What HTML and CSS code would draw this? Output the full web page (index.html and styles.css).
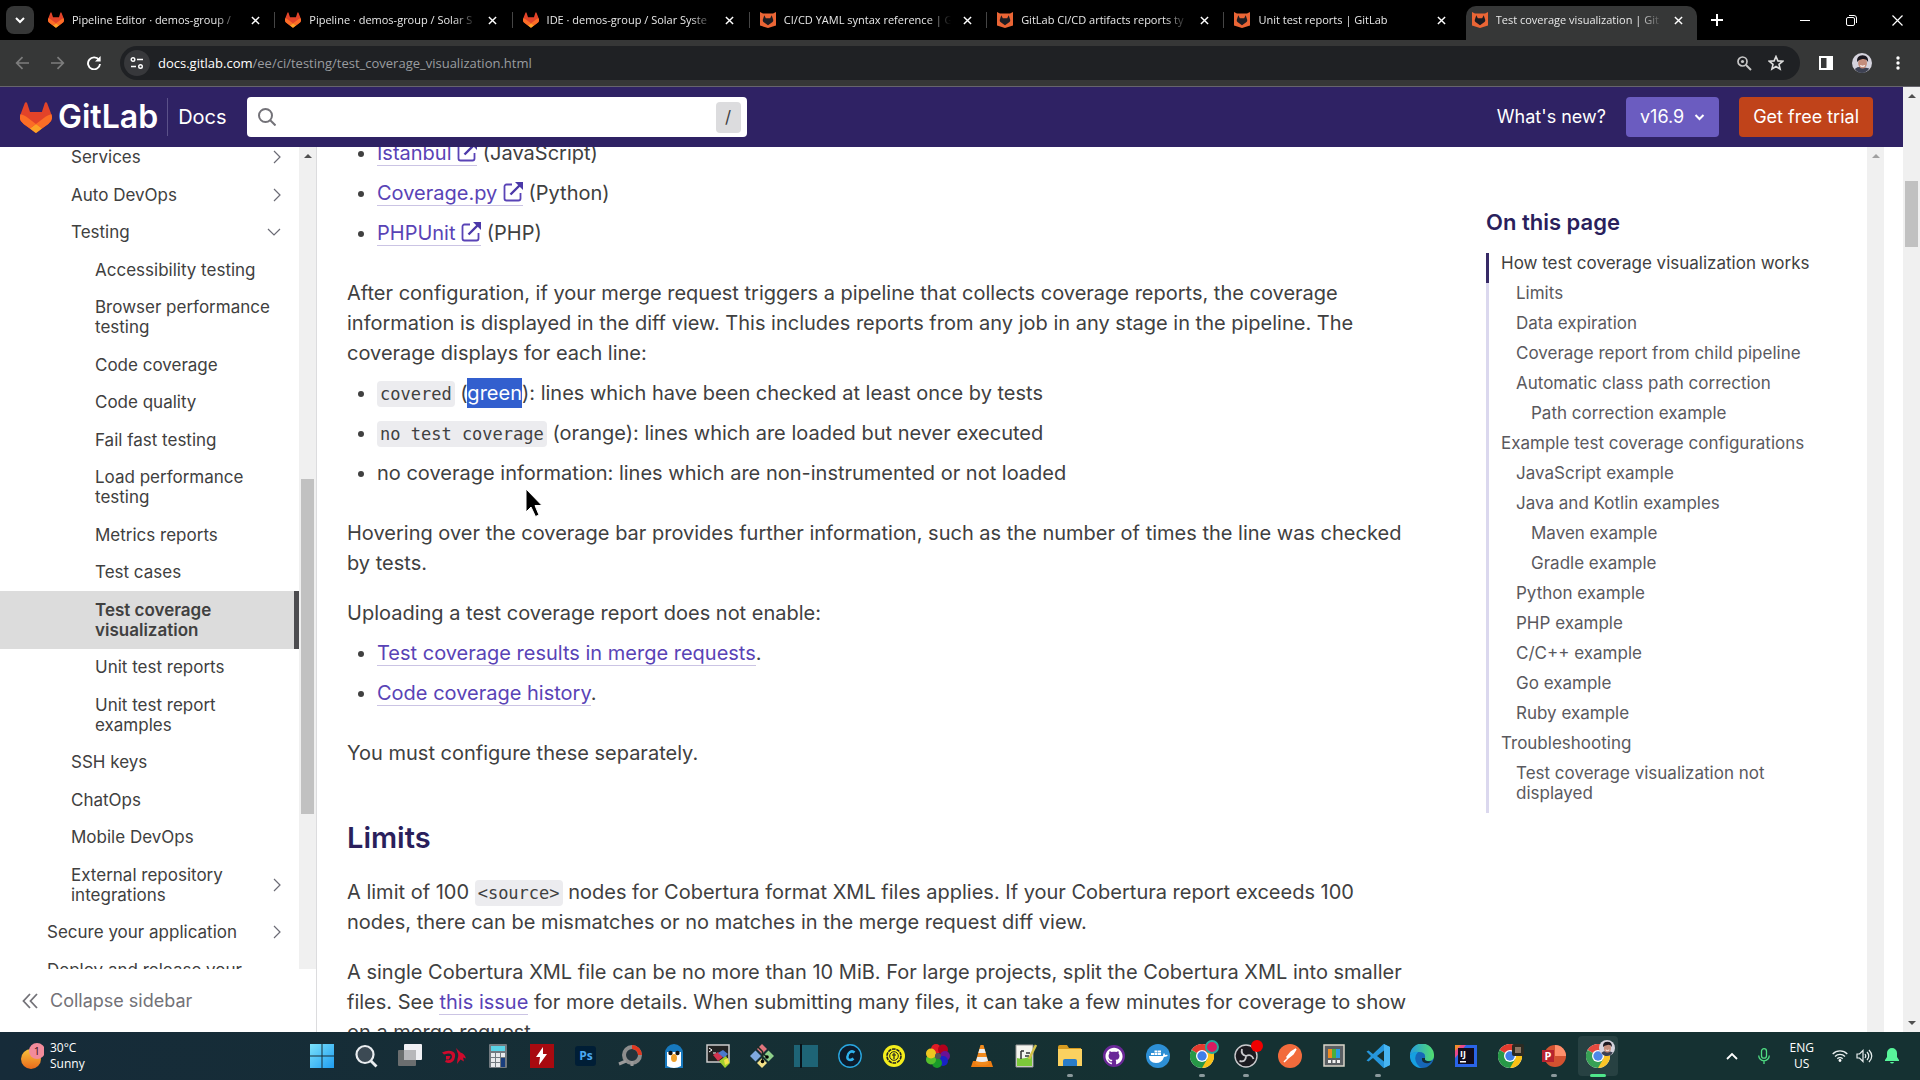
FILE: index.html
```html
<!DOCTYPE html>
<html lang="en">
<head>
<meta charset="utf-8">
<title>Test coverage visualization | GitLab</title>
<link rel="stylesheet" href="styles.css">
</head>
<body>
<svg class="defs" aria-hidden="true">
  <symbol id="tanuki" viewBox="0 0 25 24">
    <path fill="#E24329" d="m24.507 9.5-.034-.09L21.082.562a.896.896 0 0 0-1.694.091l-2.29 7.01H7.825L5.535.653a.898.898 0 0 0-1.694-.09L.451 9.411.416 9.5a6.297 6.297 0 0 0 2.09 7.278l.012.01.03.022 5.16 3.867 2.56 1.935 1.554 1.176a1.051 1.051 0 0 0 1.268 0l1.555-1.176 2.56-1.935 5.197-3.89.014-.01A6.297 6.297 0 0 0 24.507 9.5Z"/>
    <path fill="#FC6D26" d="m24.507 9.5-.034-.09a11.44 11.44 0 0 0-4.56 2.051l-7.447 5.632 4.742 3.584 5.197-3.89.014-.01A6.297 6.297 0 0 0 24.507 9.5Z"/>
    <path fill="#FCA326" d="m7.707 20.677 2.56 1.935 1.555 1.176a1.051 1.051 0 0 0 1.268 0l1.555-1.176 2.56-1.935-4.743-3.584-4.755 3.584Z"/>
    <path fill="#FC6D26" d="M5.01 11.461a11.43 11.43 0 0 0-4.56-2.05L.416 9.5a6.297 6.297 0 0 0 2.09 7.278l.012.01.03.022 5.16 3.867 4.745-3.584-7.444-5.632Z"/>
  </symbol>
  <symbol id="docsfox" viewBox="0 0 16 16">
    <path fill="#ea6535" d="M0 0l3 1.500h10L16 0v13.500L8 16 0 13.500z"/>
    <path fill="#1c1c22" d="M4.300 3.300l1.500 2.900h4.400l1.500-2.900 1.500 4.500c.2 1-.2 1.900-1 2.500L8 13.300l-4.200-3c-.8-.6-1.200-1.500-1-2.500z"/>
  </symbol>
  <symbol id="close" viewBox="0 0 10 10"><path d="M1 1l8 8M9 1l-8 8" stroke="#fff" stroke-width="1.600" fill="none"/></symbol>
  <symbol id="chev" viewBox="0 0 8 14"><path d="M1 1l6 6-6 6" stroke="#6b6b75" stroke-width="1.200" fill="none"/></symbol>
  <symbol id="chev-down" viewBox="0 0 14 8"><path d="M1 1l6 6 6-6" stroke="#6b6b75" stroke-width="1.200" fill="none"/></symbol>
  <symbol id="ext" viewBox="0 0 20 20"><path d="M9 2.500H3.500A2 2 0 0 0 1.500 4.500v12a2 2 0 0 0 2 2h12a2 2 0 0 0 2-2V11" stroke="#5943b6" stroke-width="1.800" fill="none"/><path d="M7.500 12.500L17 3" stroke="#4b38a8" stroke-width="2.400"/><path d="M12 0h8v8z" fill="#4b38a8"/></symbol>
  <symbol id="chrome" viewBox="0 0 24 24">
    <circle cx="12" cy="12" r="12" fill="#fff"/>
    <path fill="#e33b2e" d="M12 12L1.600 6A12 12 0 0 1 22.400 6z"/>
    <path fill="#fbc116" d="M12 12L22.400 6A12 12 0 0 1 12 24z"/>
    <path fill="#279847" d="M1.600 6A12 12 0 0 0 12 24l5.200-9-5.200-3z"/>
    <circle cx="12" cy="12" r="6" fill="#fff"/><circle cx="12" cy="12" r="4.700" fill="#3f7ee8"/>
  </symbol>
  <symbol id="face" viewBox="0 0 18 18">
    <circle cx="9" cy="9" r="9" fill="#d5d3dd"/>
    <path fill="#3d4152" d="M2.500 14.500Q5 12 9 12.500t6.500 1.500Q13 18 9 18t-6.500-3.500z"/>
    <ellipse cx="9.500" cy="9" rx="4" ry="5" fill="#c58e7c"/>
    <path fill="#1c1820" d="M4.500 8Q4 2 9.500 2t5 6q-1.500-3-5-2.500T4.500 8z"/>
    <path d="M7.500 11.200q2 1.500 4 0" stroke="#fff" fill="none"/>
  </symbol>
</svg>

<header class="tabstrip">
  <button class="tab-search" aria-label="Search tabs"><svg width="10" height="8" viewBox="0 0 10 8"><path d="M1 2l4 4 4-4" stroke="#fff" stroke-width="2" fill="none"/></svg></button>
  <nav class="tabs" aria-label="Browser tabs">
    <div class="tab"><svg class="fav"><use href="#tanuki"/></svg><span class="tab-title">Pipeline Editor · demos-group /</span><button class="tab-close" aria-label="Close"><svg><use href="#close"/></svg></button></div>
    <div class="tab"><svg class="fav"><use href="#tanuki"/></svg><span class="tab-title">Pipeline · demos-group / Solar S</span><button class="tab-close" aria-label="Close"><svg><use href="#close"/></svg></button></div>
    <div class="tab"><svg class="fav"><use href="#tanuki"/></svg><span class="tab-title">IDE · demos-group / Solar Syste</span><button class="tab-close" aria-label="Close"><svg><use href="#close"/></svg></button></div>
    <div class="tab"><svg class="fav"><use href="#docsfox"/></svg><span class="tab-title">CI/CD YAML syntax reference | G</span><button class="tab-close" aria-label="Close"><svg><use href="#close"/></svg></button></div>
    <div class="tab"><svg class="fav"><use href="#docsfox"/></svg><span class="tab-title">GitLab CI/CD artifacts reports ty</span><button class="tab-close" aria-label="Close"><svg><use href="#close"/></svg></button></div>
    <div class="tab"><svg class="fav"><use href="#docsfox"/></svg><span class="tab-title">Unit test reports | GitLab</span><button class="tab-close" aria-label="Close"><svg><use href="#close"/></svg></button></div>
    <div class="tab active"><svg class="fav"><use href="#docsfox"/></svg><span class="tab-title">Test coverage visualization | Git</span><button class="tab-close" aria-label="Close"><svg><use href="#close"/></svg></button></div>
  </nav>
  <button class="new-tab" aria-label="New tab"><svg width="12" height="12" viewBox="0 0 12 12"><path d="M6 0v12M0 6h12" stroke="#fff" stroke-width="2"/></svg></button>
  <div class="window-controls">
    <button aria-label="Minimize"><svg width="10" height="10" viewBox="0 0 10 10"><path d="M0 5.500h10" stroke="#fff"/></svg></button>
    <button aria-label="Restore"><svg width="11" height="11" viewBox="0 0 11 11"><rect x=".5" y="2.500" width="8" height="8" rx="1.500" fill="none" stroke="#fff"/><path d="M3 .5h5a2.500 2.500 0 0 1 2.500 2.500v5" fill="none" stroke="#fff"/></svg></button>
    <button aria-label="Close window"><svg width="11" height="11" viewBox="0 0 11 11"><path d="M.5.5l10 10M10.500.5l-10 10" stroke="#fff" stroke-width="1.200"/></svg></button>
  </div>
</header>

<div class="toolbar">
  <button class="tool" aria-label="Back"><svg width="14" height="14" viewBox="0 0 14 14"><path d="M14 7H2M7.500 1.200L1.700 7l5.800 5.800" stroke="#7d7d7d" stroke-width="1.700" fill="none"/></svg></button>
  <button class="tool" aria-label="Forward"><svg width="14" height="14" viewBox="0 0 14 14"><path d="M0 7h12M6.500 1.200L12.300 7l-5.800 5.800" stroke="#7d7d7d" stroke-width="1.700" fill="none"/></svg></button>
  <button class="tool" aria-label="Reload"><svg width="14" height="14" viewBox="0 0 14 14"><path d="M12 4A6 6 0 1 0 13 8" stroke="#fff" stroke-width="1.900" fill="none"/><path d="M13.600 0v5.500H8z" fill="#fff"/></svg></button>
  <div class="omnibox">
    <button class="site-info" aria-label="Site information"><svg width="14" height="12" viewBox="0 0 14 12"><circle cx="3" cy="2.500" r="1.800" stroke="#fff" stroke-width="1.400" fill="none"/><path d="M7 2.500h6M1 9.500h5" stroke="#fff" stroke-width="1.600"/><circle cx="10.500" cy="9.500" r="1.800" stroke="#fff" stroke-width="1.400" fill="none"/></svg></button>
    <div class="url"><b>docs.gitlab.com</b>/ee/ci/testing/test_coverage_visualization.html</div>
    <button class="tool" aria-label="Zoom"><svg width="15" height="15" viewBox="0 0 15 15"><circle cx="5.500" cy="5.500" r="4.500" stroke="#c8c8c8" stroke-width="1.700" fill="none"/><path d="M9 9l5 5" stroke="#c8c8c8" stroke-width="2"/><circle cx="5.500" cy="5.500" r="1.600" fill="#c8c8c8"/></svg></button>
    <button class="tool" aria-label="Bookmark"><svg width="16" height="16" viewBox="0 0 16 16"><path d="M8 1.500l1.900 4.400 4.700.4-3.600 3.100 1.100 4.600L8 11.500 3.900 14 5 9.400 1.400 6.300l4.700-.4z" stroke="#ddd" stroke-width="1.600" fill="none"/></svg></button>
  </div>
  <button class="tool" aria-label="Side panel"><svg width="14" height="14" viewBox="0 0 14 14"><rect x="1" y="1" width="12" height="12" stroke="#fff" stroke-width="2" fill="none"/><path d="M7.500 0H14v14H7.500z" fill="#fff"/></svg></button>
  <button class="tool" aria-label="Profile"><svg width="20" height="20"><use href="#face"/></svg></button>
  <button class="tool" aria-label="Menu"><svg width="4" height="14" viewBox="0 0 4 14"><g fill="#fff"><circle cx="2" cy="2" r="1.700"/><circle cx="2" cy="7" r="1.700"/><circle cx="2" cy="12" r="1.700"/></g></svg></button>
</div>

<div class="viewport">
  <div class="page">
    <header class="site-header">
      <a class="brand" href="#"><svg width="32" height="31"><use href="#tanuki"/></svg><span>GitLab</span></a>
      <a class="docs" href="#">Docs</a>
      <label class="search">
        <svg width="18" height="18" viewBox="0 0 18 18"><circle cx="7.500" cy="7.500" r="6.500" stroke="#737278" stroke-width="2" fill="none"/><path d="M12 12l5.500 5.500" stroke="#737278" stroke-width="2"/></svg>
        <input type="text" aria-label="Search">
        <kbd>/</kbd>
      </label>
      <a class="whats-new" href="#">What's new?</a>
      <button class="btn version">v16.9<svg width="11" height="7" viewBox="0 0 11 7"><path d="M1.500 1l4 4 4-4" stroke="#fff" stroke-width="2" fill="none"/></svg></button>
      <button class="btn trial">Get free trial</button>
    </header>
    <div class="columns">
      <aside class="sidebar">
        <div class="nav-area">
          <ul class="nav">
            <li class="l2"><a href="#">Services</a><svg class="chev"><use href="#chev"/></svg></li>
            <li class="l2"><a href="#">Auto DevOps</a><svg class="chev"><use href="#chev"/></svg></li>
            <li class="l2"><a href="#">Testing</a><svg class="chev-down"><use href="#chev-down"/></svg></li>
            <li class="l3"><a href="#">Accessibility testing</a></li>
            <li class="l3"><a href="#">Browser performance testing</a></li>
            <li class="l3"><a href="#">Code coverage</a></li>
            <li class="l3"><a href="#">Code quality</a></li>
            <li class="l3"><a href="#">Fail fast testing</a></li>
            <li class="l3"><a href="#">Load performance testing</a></li>
            <li class="l3"><a href="#">Metrics reports</a></li>
            <li class="l3"><a href="#">Test cases</a></li>
            <li class="l3 current"><a href="#">Test coverage visualization</a></li>
            <li class="l3"><a href="#">Unit test reports</a></li>
            <li class="l3"><a href="#">Unit test report examples</a></li>
            <li class="l2"><a href="#">SSH keys</a></li>
            <li class="l2"><a href="#">ChatOps</a></li>
            <li class="l2"><a href="#">Mobile DevOps</a></li>
            <li class="l2"><a href="#">External repository integrations</a><svg class="chev"><use href="#chev"/></svg></li>
            <li class="l1"><a href="#">Secure your application</a><svg class="chev"><use href="#chev"/></svg></li>
            <li class="l1"><a href="#">Deploy and release your application</a></li>
          </ul>
          <div class="scrollbar"><i class="arrow up"></i><div class="track"><div class="thumb" style="top:39%;height:41.7%"></div></div></div>
        </div>
        <button class="collapse"><svg width="16" height="16" viewBox="0 0 16 16"><path d="M8 1L1.500 8 8 15M15 1L8.500 8 15 15" stroke="#737278" stroke-width="1.800" fill="none"/></svg>Collapse sidebar</button>
      </aside>
      <main class="article">
        <ul>
          <li><a href="#">Istanbul <svg class="ext"><use href="#ext"/></svg></a> (JavaScript)</li>
          <li><a href="#">Coverage.py <svg class="ext"><use href="#ext"/></svg></a> (Python)</li>
          <li><a href="#">PHPUnit <svg class="ext"><use href="#ext"/></svg></a> (PHP)</li>
        </ul>
        <p class="lead">After configuration, if your merge request triggers a pipeline that collects coverage reports, the coverage information is displayed in the diff view. This includes reports from any job in any stage in the pipeline. The coverage displays for each line:</p>
        <ul>
          <li><code>covered</code> (<mark>green</mark>): lines which have been checked at least once by tests</li>
          <li><code>no test coverage</code> (orange): lines which are loaded but never executed</li>
          <li>no coverage information: lines which are non-instrumented or not loaded</li>
        </ul>
        <p>Hovering over the coverage bar provides further information, such as the number of times the line was checked by tests.</p>
        <p class="lead">Uploading a test coverage report does not enable:</p>
        <ul>
          <li><a href="#">Test coverage results in merge requests</a>.</li>
          <li><a href="#">Code coverage history</a>.</li>
        </ul>
        <p>You must configure these separately.</p>
        <h2>Limits</h2>
        <p>A limit of 100 <code>&lt;source&gt;</code> nodes for Cobertura format XML files applies. If your Cobertura report exceeds 100 nodes, there can be mismatches or no matches in the merge request diff view.</p>
        <p>A single Cobertura XML file can be no more than 10 MiB. For large projects, split the Cobertura XML into smaller files. See <a href="#">this issue</a> for more details. When submitting many files, it can take a few minutes for coverage to show on a merge request.</p>
      </main>
      <nav class="toc" aria-label="On this page">
        <div class="toc-body">
          <h4>On this page</h4>
          <ul>
            <li class="here"><a href="#">How test coverage visualization works</a></li>
            <li class="t2"><a href="#">Limits</a></li>
            <li class="t2"><a href="#">Data expiration</a></li>
            <li class="t2"><a href="#">Coverage report from child pipeline</a></li>
            <li class="t2"><a href="#">Automatic class path correction</a></li>
            <li class="t3"><a href="#">Path correction example</a></li>
            <li><a href="#">Example test coverage configurations</a></li>
            <li class="t2"><a href="#">JavaScript example</a></li>
            <li class="t2"><a href="#">Java and Kotlin examples</a></li>
            <li class="t3"><a href="#">Maven example</a></li>
            <li class="t3"><a href="#">Gradle example</a></li>
            <li class="t2"><a href="#">Python example</a></li>
            <li class="t2"><a href="#">PHP example</a></li>
            <li class="t2"><a href="#">C/C++ example</a></li>
            <li class="t2"><a href="#">Go example</a></li>
            <li class="t2"><a href="#">Ruby example</a></li>
            <li><a href="#">Troubleshooting</a></li>
            <li class="t2"><a href="#">Test coverage visualization not displayed</a></li>
          </ul>
        </div>
        <div class="scrollbar idle"><i class="arrow up"></i><div class="track"></div></div>
      </nav>
    </div>
  </div>
  <div class="scrollbar"><i class="arrow up"></i><div class="track"><div class="thumb" style="top:8.4%;height:7.2%"></div></div><i class="arrow down"></i></div>
</div>

<footer class="taskbar">
  <div class="weather">
    <svg width="24" height="28" viewBox="0 0 24 28"><defs><linearGradient id="sun" x1="0" y1="0" x2="0" y2="1"><stop offset="0" stop-color="#f8c33b"/><stop offset="1" stop-color="#e9691c"/></linearGradient></defs><circle cx="11" cy="17" r="10" fill="url(#sun)"/><circle cx="17" cy="9" r="8" fill="#f28b9b"/><text x="17" y="13" text-anchor="middle" font-size="11" fill="#3a1018">1</text></svg>
    <div>30°C<br>Sunny</div>
  </div>
  <div class="apps">
    <button aria-label="Start"><svg viewBox="0 0 24 24"><defs><linearGradient id="win" x1="0" y1="0" x2="1" y2="1"><stop offset="0" stop-color="#7be2fb"/><stop offset="1" stop-color="#1f9df0"/></linearGradient></defs><path fill="url(#win)" d="M0 0h11.500v11.500H0zM12.500 0H24v11.500H12.500zM0 12.500h11.500V24H0zM12.500 12.500H24V24H12.500z"/></svg></button>
    <button aria-label="Search"><svg viewBox="0 0 24 24"><circle cx="11" cy="10.500" r="8.500" fill="#3c4a54" stroke="#e9edf0" stroke-width="2.200"/><path d="M17 17l5.500 5.500" stroke="#e9edf0" stroke-width="2.800"/></svg></button>
    <button aria-label="Task view"><svg viewBox="0 0 24 24"><rect x="6" y="0" width="18" height="16" rx="1" fill="#f0f0f4"/><rect x="0" y="6" width="18" height="16" rx="1" fill="#747576" opacity=".9"/><path fill="#b7b7ba" d="M6 6h12v10H6z"/></svg></button>
    <button aria-label="Red wing"><svg viewBox="0 0 24 24"><path fill="#cf0a2c" d="M0 8.500Q5 6 9 7q5 1 4 6-1 6-7 6l-3-1 1-2q5 1 6-3 0-4-4-3.500L2 10.500zM4 12h4.500L7 15.500H4zM14 4l4.500 4.500q4 1 5.500 6l-3-1 1 4-3.500-2L15 20l.5-5q1.500-4 0-6.500z"/></svg></button>
    <button aria-label="Calculator"><svg viewBox="0 0 24 24"><rect x="3" width="18" height="24" rx="1" fill="#727a80"/><path fill="#5ad3e6" d="M5 2h14v5H5z"/><path fill="#e8eaec" d="M5 9h4v4H5zm5 0h4v4h-4zm5 0h4v4h-4zM5 14h4v4H5zm5 0h4v4h-4zM5 19h4v4H5zm5 0h4v4h-4z"/><path fill="#193e7d" d="M15 14h4v9h-4z"/></svg></button>
    <button aria-label="Flash"><svg viewBox="0 0 24 24"><path fill="#a80a10" d="M0 0h24v24H0z"/><path fill="#fff" d="M13 3L6 13h4l-1 8 8-11h-4z"/></svg></button>
    <button aria-label="Photoshop"><svg viewBox="0 0 24 24"><rect x="1" y="2" width="21" height="20" rx="3" fill="#001e36"/><text x="12" y="16" font-size="12" font-weight="700" text-anchor="middle" fill="#4aa8ef">Ps</text></svg></button>
    <button aria-label="Tracker"><svg viewBox="0 0 24 24"><circle cx="14" cy="11" r="8" fill="#24343c" stroke="#8d8d8d" stroke-width="4"/><path d="M14 3a8 8 0 0 1 8 8" stroke="#e1371f" stroke-width="4" fill="none"/><path d="M8 17l-7 3M14 17v5" stroke="#9a9a9a" stroke-width="3"/></svg></button>
    <button aria-label="Penguin"><svg viewBox="0 0 24 24"><path fill="#1779be" d="M3 24V9a9 9 0 0 1 18 0v15z"/><path fill="#fff" d="M5 22V8h14v14q-7 4-14 0z"/><g fill="#111"><circle cx="8.500" cy="9" r="2.200"/><circle cx="15.500" cy="9" r="2.200"/></g><ellipse cx="12" cy="14" rx="3" ry="4" fill="#efa02a"/></svg></button>
    <button aria-label="Terminal"><svg viewBox="0 0 24 24"><path fill="#222" stroke="#ccc" stroke-width="1.500" d="M1 1h22v17H1z"/><path d="M3 4l3 2-3 2m4 1h3" stroke="#fff" fill="none"/><path fill="#d2334e" d="M7 11l5-3 5 5-5 4z"/><path fill="#4a79cc" d="M12 9l5-3 5 4-4 4z"/><path fill="#a2cf2e" d="M13 17l7-5 4 7-5 5z"/><path fill="#f5e34a" d="M18 16l4-2 1 5-4 2z"/></svg></button>
    <button aria-label="Git"><svg viewBox="0 0 24 24"><path fill="#e0747c" d="M12 0l5 5-5 5-5-5z"/><path fill="#7fa9df" d="M5.500 6.500l5.500 5.500-5.500 5.500L0 12z"/><path fill="#8ecf8a" d="M18.500 6.500L24 12l-5.500 5.500L13 12z"/><path fill="#f1df87" d="M12 14l5 5-5 5-5-5z"/><path d="M7.500 2.500l5 5V18M12 9l5 4" stroke="#1b2a22" stroke-width="1.500" fill="none"/><circle cx="12.500" cy="17.500" r="1.800"/><circle cx="17" cy="13" r="1.800"/></svg></button>
    <button aria-label="Layout"><svg viewBox="0 0 24 24"><path fill="#1e6476" d="M0 1h6v22H0zM8 1h16v22H8z"/><path fill="#08131a" d="M6 0h2v24H6z"/></svg></button>
    <button aria-label="C editor"><svg viewBox="0 0 24 24"><circle cx="12" cy="12" r="11.200" fill="#0c1b2c" stroke="#29a6df" stroke-width="1.400"/><path d="M16.500 8.500q-2-2-4.500-.5c-3 2-4 8 0 8q2 0 3.500-1.500" stroke="#2fb1ee" stroke-width="2.500" fill="none"/></svg></button>
    <button aria-label="Yellow gear"><svg viewBox="0 0 24 24"><circle cx="12" cy="12" r="11" fill="#f4ee1c"/><circle cx="12" cy="12" r="7" fill="none" stroke="#222" stroke-width="1.600" stroke-dasharray="3.600 .8"/><circle cx="12" cy="12" r="4.300" fill="none" stroke="#222"/><path d="M12 9v6M10 11h4" stroke="#222" stroke-width="1.200"/></svg></button>
    <button aria-label="Colour wheel"><svg viewBox="0 0 24 24"><circle cx="10" cy="5" r="5" fill="#e01b24"/><circle cx="17" cy="5.500" r="5" fill="#b4001c"/><circle cx="19" cy="12" r="5" fill="#6a1195"/><circle cx="17" cy="17" r="5" fill="#1822c5"/><circle cx="11" cy="19" r="5" fill="#189b2a"/><circle cx="5" cy="15.500" r="5" fill="#55c12c"/><circle cx="5" cy="9.500" r="5" fill="#eec720"/><circle cx="12" cy="12" r="3" fill="#555"/></svg></button>
    <button aria-label="VLC"><svg viewBox="0 0 24 24"><path fill="#ee7d11" d="M3 17h18l2 6H1z"/><path fill="#f28a1c" d="M10.500 1h3L19 20q-7 3-14 0z"/><path fill="#eceef1" d="M9.500 5h5l1.200 4H8.300zM7.300 13h9.400l1.300 4q-6 2-12 0z"/></svg></button>
    <button aria-label="Notepad++"><svg viewBox="0 0 24 24"><path fill="#f4f4ee" stroke="#999" d="M2 1h17v22H2z"/><path fill="#7cc93a" d="M3 14q8 2 15-3v11H3z"/><path d="M7 7v8M7 7h3M12 9h4M11 12h4" stroke="#333" stroke-width="1.500"/><path d="M22 1l-7 14" stroke="#d2c148" stroke-width="2.500"/></svg></button>
    <button class="open" aria-label="Files"><svg viewBox="0 0 24 24"><path fill="#d79b20" d="M0 3q0-2 2-2h7l2 3h12v4H0z"/><path fill="#fbd160" d="M0 5h24v17H0z"/><path fill="#2a7cc8" d="M5 22v-5q0-2 2-2h10q2 0 2 2v5z"/></svg></button>
    <button aria-label="GitHub"><svg viewBox="0 0 24 24"><circle cx="12" cy="12" r="11" fill="#6a2898"/><path fill="#fff" transform="translate(3.500 3.500) scale(.71)" d="M12 .297c-6.630 0-12 5.373-12 12 0 5.303 3.438 9.800 8.205 11.385.6.113.82-.258.82-.577 0-.285-.01-1.040-.015-2.040-3.338.724-4.042-1.610-4.042-1.610C4.422 18.070 3.633 17.700 3.633 17.700c-1.087-.744.084-.729.084-.729 1.205.084 1.838 1.236 1.838 1.236 1.070 1.835 2.809 1.305 3.495.998.108-.776.417-1.305.76-1.605-2.665-.3-5.466-1.332-5.466-5.930 0-1.310.465-2.380 1.235-3.220-.135-.303-.54-1.523.105-3.176 0 0 1.005-.322 3.300 1.230.96-.267 1.980-.399 3-.405 1.020.006 2.040.138 3 .405 2.280-1.552 3.285-1.230 3.285-1.230.645 1.653.24 2.873.12 3.176.765.84 1.230 1.910 1.230 3.220 0 4.610-2.805 5.625-5.475 5.920.42.36.81 1.096.81 2.220 0 1.606-.015 2.896-.015 3.286 0 .315.21.69.825.57C20.565 22.092 24 17.592 24 12.297c0-6.627-5.373-12-12-12"/></svg></button>
    <button aria-label="Docker"><svg viewBox="0 0 24 24"><circle cx="12" cy="12" r="12" fill="#2d8fd5"/><path fill="#fff" d="M3 12h14q0-2 1-3 1 1 1 2 1-.5 3 0-1 2-4 2-2 6-8 6-7 0-7-7zM5 9h3v2H5zm3.500 0h3v2h-3zm3.500 0h3v2h-3zM8.500 6.500h3v2h-3zm3.500 0h3v2h-3z"/></svg></button>
    <button class="open" aria-label="Chrome"><svg viewBox="0 0 24 24"><use href="#chrome"/></svg><i class="badge ring"></i></button>
    <button class="open" aria-label="OBS"><svg viewBox="0 0 24 24"><circle cx="12" cy="12" r="11" fill="#1b1b20" stroke="#c9c9cc" stroke-width="1.400"/><path d="M12 12Q6.500 10.500 8 5M12 12q5.500-2.500 7.500 3M12 12q0 6.500-6.500 5" stroke="#c9c9cc" stroke-width="1.800" fill="none"/></svg><i class="badge rec"></i></button>
    <button aria-label="Postman"><svg viewBox="0 0 24 24"><circle cx="12" cy="12" r="12" fill="#f26b3c"/><path d="M6 18l5-5M18 5l-3 5-5 4-1-1 4-5z" stroke="#fff" stroke-width="1.500" fill="#fff"/></svg></button>
    <button aria-label="PowerToys"><svg viewBox="0 0 24 24"><path fill="#5a5f63" stroke="#d9d5c9" stroke-width="1.500" d="M2 1h20v21H2z"/><path fill="#ee8b20" d="M6 5h4v9H6z"/><path fill="#4cae3b" d="M10 5h4v9h-4z"/><path fill="#2a9ae0" d="M14 5h4v9h-4z"/><path fill="#f0f0f0" d="M6 16h3v3H6zm4.500 0h3v3h-3zm4.500 0h3v3h-3z"/></svg></button>
    <button class="open" aria-label="VS Code"><svg viewBox="0 0 24 24"><path fill="#2696dc" fill-rule="evenodd" d="M17.500 0L24 3v18l-6.500 3L7 14l-4.500 3.500L.5 16.500 5 12 .5 7.500l2-1L7 10zM18 6.500L11 12l7 5.500z"/><path fill="#47b5f2" d="M18 0l6 3v18l-6 3z"/></svg></button>
    <button aria-label="Edge"><svg viewBox="0 0 24 24"><defs><linearGradient id="edge" x1="0" x2="1"><stop offset="0" stop-color="#249ae0"/><stop offset="1" stop-color="#52de6c"/></linearGradient></defs><circle cx="12" cy="12" r="12" fill="#1667b8"/><path fill="url(#edge)" d="M0 11A12 12 0 0 1 24 12q0 5-6 5-4 0-3-3 1-6-6-6-6 0-9 3z"/><path fill="#16a0e0" d="M0 11q4-4 8-3-5 5-1 12 2 3 5 4A12 12 0 0 1 0 11z"/><path fill="#142e36" d="M15 14q-1 4 7 3l-3 2q-8 1-7-5z"/></svg></button>
    <button aria-label="IntelliJ"><svg viewBox="0 0 24 24"><path fill="#2a64e8" d="M1 1h22v22H1z"/><path fill="#e8498a" d="M1 1h11L1 14z"/><path fill="#f08c2d" d="M1 1h6L1 7z"/><path fill="#120c1c" d="M4 4h16v16H4z"/><text x="6" y="13" font-size="9" font-weight="700" fill="#fff">IJ</text><path fill="#fff" d="M6 17h6v1.500H6z"/></svg></button>
    <button aria-label="Chrome profile"><svg viewBox="0 0 24 24"><use href="#chrome"/></svg><i class="badge photo"></i></button>
    <button class="open" aria-label="PowerPoint"><svg viewBox="0 0 24 24"><circle cx="13" cy="12" r="11" fill="#d35230"/><path fill="#ff8f6b" d="M13 1a11 11 0 0 1 11 11H13z"/><path fill="#b7232f" d="M0 6h12v12H0z"/><text x="6" y="16" font-size="11" font-weight="700" text-anchor="middle" fill="#fff">P</text></svg></button>
    <button class="open focused" aria-label="Chrome, current window"><svg viewBox="0 0 24 24"><use href="#chrome"/></svg><i class="badge avatar"><svg viewBox="0 0 18 18"><use href="#face"/></svg></i></button>
  </div>
  <div class="tray">
    <svg width="12" height="8" viewBox="0 0 12 8"><path d="M1 7l5-5 5 5" stroke="#fff" stroke-width="1.800" fill="none"/></svg>
    <svg width="12" height="16" viewBox="0 0 12 16"><rect x="3.500" y=".7" width="5" height="9.500" rx="2.500" stroke="#4fdc83" stroke-width="1.300" fill="none"/><path d="M.7 7.500a5.300 5.300 0 0 0 10.600 0M6 13v3" stroke="#4fdc83" stroke-width="1.300" fill="none"/></svg>
    <div class="lang">ENG<br>US</div>
    <div class="status">
      <svg width="16" height="13" viewBox="0 0 16 13"><path d="M.7 5a10.300 10.300 0 0 1 14.600 0M3 7.500a7 7 0 0 1 10 0M5.300 9.800a3.800 3.800 0 0 1 5.400 0" stroke="#e8eeee" stroke-width="1.300" fill="none"/><circle cx="8" cy="11.500" r="1.400" fill="#fff"/></svg>
      <svg width="17" height="14" viewBox="0 0 17 14"><path d="M1 5h2.500L7 1.500v11L3.500 9H1zM9 5q1.500 2 0 4M11 3q3.500 4 0 8M13 1q5.500 6 0 12" stroke="#e8eeee" stroke-width="1.200" fill="none"/></svg>
    </div>
    <svg width="14" height="16" viewBox="0 0 14 16"><path fill="#58f59a" d="M7 0a5 5 0 0 1 5 5v4l2 3v1H0v-1l2-3V5a5 5 0 0 1 5-5zM5 14h4q-.5 1.500-2 1.500T5 14z"/></svg>
  </div>
</footer>
<svg class="cursor" width="18" height="30" viewBox="0 0 18 30"><path d="M1 1v23l5-5 4.500 9.500 3.500-1.500-4-9.500h7z" fill="#000" stroke="#fff"/></svg>
</body>
</html>
```
FILE: styles.css
```css
* { box-sizing: border-box; }
body {
  margin: 0;
  height: 100vh;
  display: flex;
  flex-direction: column;
  overflow: hidden;
  background: #fff;
  color: #404040;
  font-family: Inter, "Liberation Sans", sans-serif;
  font-size: 20px;
  line-height: 30px;
}
button { border: 0; padding: 0; margin: 0; background: none; font: inherit; color: inherit; }
a { text-decoration: none; color: inherit; }
ul { list-style: none; margin: 0; padding: 0; }
svg { flex: none; }
.defs { display: none; }

/* Browser tabs */
.tabstrip {
  flex: none;
  display: flex;
  align-items: center;
  height: 40px;
  padding-left: 6px;
  background: #000;
  color: #e8e8e8;
  font-family: "Open Sans", "Noto Sans", sans-serif;
  font-size: 11px;
  line-height: 16px;
}
.tab-search { width: 28px; height: 28px; border-radius: 8px; background: #363737; display: grid; place-items: center; margin-right: 4px; }
.tabs { display: flex; flex: 0 1 1661px; min-width: 0; align-self: stretch; }
.tab { flex: 1 1 0; min-width: 0; display: flex; align-items: center; gap: 8px; padding: 0 12px 0 10px; position: relative; }
.tab::after { content: ""; position: absolute; right: 0; top: 12px; width: 1px; height: 16px; background: #454545; }
.tab.active::after, .tab:nth-child(6)::after { display: none; }
.tab.active { background: #363737; border-radius: 10px 10px 0 0; margin: 6px 2px 0 4px; padding: 0 10px 6px 6px; }
.fav { width: 16px; height: 16px; }
.tab-title { flex: 1; min-width: 0; overflow: hidden; white-space: nowrap; -webkit-mask-image: linear-gradient(90deg, #000 86%, transparent); mask-image: linear-gradient(90deg, #000 86%, transparent); }
.tab-close { width: 16px; height: 16px; display: grid; place-items: center; }
.tab-close svg { width: 9px; height: 9px; }
.new-tab { width: 36px; display: grid; place-items: center; }
.window-controls { display: flex; margin-left: auto; }
.window-controls button { width: 46px; display: grid; place-items: center; }

/* Address bar */
.toolbar {
  flex: none;
  display: flex;
  align-items: center;
  height: 47px;
  padding: 0 4px;
  background: #363737;
  border-bottom: 1px solid #66646c;
  font-family: "Open Sans", "Noto Sans", sans-serif;
  font-size: 13px;
  line-height: 20px;
}
.tool { width: 36px; height: 28px; display: grid; place-items: center; }
.omnibox { flex: 1; display: flex; align-items: center; height: 34px; margin: 0 8px; padding: 0 8px 0 4px; border-radius: 17px; background: #1f2124; }
.omnibox .tool { width: 32px; }
.site-info { width: 26px; height: 26px; border-radius: 50%; background: #37383b; display: grid; place-items: center; margin-right: 8px; }
.url { flex: 1; color: #9a9da0; }
.url b { font-weight: 400; color: #fff; }

/* Document */
.viewport { flex: 1; min-height: 0; display: flex; }
.page { flex: 1; min-width: 0; display: flex; flex-direction: column; }
.site-header {
  flex: none;
  display: flex;
  align-items: center;
  height: 60px;
  padding: 0 30px 0 20px;
  background: #2f2264;
  color: #fff;
}
.brand { display: flex; align-items: center; gap: 6px; font-size: 32px; font-weight: 600; }
.docs { margin-left: 9px; padding: 4px 0 4px 10px; border-left: 1px solid #5b5189; }
.search { display: flex; align-items: center; width: 500px; height: 40px; margin-left: 20px; padding: 0 6px 0 11px; background: #fff; border-radius: 4px; }
.search input { flex: 1; min-width: 0; border: 0; outline: 0; background: none; font: inherit; }
.search kbd { width: 25px; height: 31px; border-radius: 4px; background: #dcdcde; color: #404040; font: 17px/31px Inter, sans-serif; text-align: center; }
.whats-new { margin-left: auto; margin-right: 20px; font-size: 18px; }
.btn { height: 40px; padding: 0 14px; border-radius: 4px; font-size: 18px; white-space: nowrap; color: #fff; }
.version { display: flex; align-items: center; gap: 10px; margin-right: 20px; background: #6b5cc0; }
.trial { background: #c0431a; }

.columns { flex: 1; min-height: 0; display: flex; padding-right: 19px; overflow: hidden; }
.sidebar { flex: none; width: 317px; display: flex; flex-direction: column; border-right: 1px solid #dcdcde; font-size: 17px; line-height: 20px; }
.nav-area { flex: 1; min-height: 0; display: flex; overflow: hidden; }
.nav { flex: 1; margin-top: -8px; }
.nav li { display: flex; align-items: center; justify-content: space-between; padding: 8px 18px 9px 47px; }
.nav li:nth-child(even) { padding-top: 9px; }
.nav .l2 { padding-left: 71px; }
.nav .l3 { padding-left: 95px; padding-right: 24px; }
.nav .current { background: #dcdcdc; border-right: 5px solid #4c4c4f; font-weight: 600; }
.chev { width: 8px; height: 14px; }
.chev-down { width: 14px; height: 8px; }
.collapse { display: flex; align-items: center; gap: 12px; height: 63px; padding-left: 22px; color: #737278; font-size: 18px; }

.article { flex: 1; min-width: 0; padding: 0 73px 0 30px; margin-top: -9px; }
.article p { margin: 0 0 20px; }
.article .lead { margin-bottom: 10px; }
.article ul { margin-bottom: 30px; padding-left: 30px; list-style: disc; }
.article li { margin-bottom: 10px; }
.article a { color: #5943b6; border-bottom: 1px solid #cbc4e4; }
.article code { padding: 3px; border-radius: 4px; background: #ececef; font: 17px/20px "DejaVu Sans Mono", monospace; }
.article mark { padding: 3px 0; background: #325fce; color: #fff; }
.article h2 { margin: 50px 0 20px; color: #2a1f5c; font-size: 29px; line-height: 39px; font-weight: 600; }
.ext { width: 20px; height: 20px; vertical-align: -2px; }

.toc { flex: none; width: 398px; display: flex; }
.toc-body { flex: 1; padding: 60px 26px 0 0; }
.toc h4 { margin: 0 0 16px; color: #2a1f5c; font-size: 22px; line-height: 30px; font-weight: 600; }
.toc ul { border-left: 3px solid #dbd8ee; font-size: 17px; line-height: 20px; color: #5a595e; }
.toc li { padding: 0 0 10px 12px; }
.toc .t2 { padding-left: 27px; }
.toc .t3 { padding-left: 42px; }
.toc .here { margin-left: -3px; padding-left: 12px; border-left: 3px solid #372a66; color: #404040; }

.scrollbar { flex: none; width: 17px; display: flex; flex-direction: column; align-items: center; background: #f0f0f0; }
.track { flex: 1; align-self: stretch; position: relative; }
.thumb { position: absolute; left: 2px; right: 2px; background: #c1c1c1; }
.arrow { width: 0; height: 0; margin: 7px 0; border: 4px solid transparent; }
.arrow.up { border-top: 0; border-bottom: 4px solid #505050; }
.arrow.down { border-bottom: 0; border-top: 4px solid #505050; }
.idle .arrow { border-bottom-color: #a0a0a0; }

/* Taskbar */
.taskbar {
  flex: none;
  display: grid;
  grid-template-columns: 1fr auto 1fr;
  height: 48px;
  background: linear-gradient(90deg, #162b39, #153132 60%);
  color: #fff;
  font-family: "Open Sans", "Noto Sans", sans-serif;
  font-size: 12px;
  line-height: 16px;
}
.weather { display: flex; align-items: center; gap: 6px; padding-left: 20px; }
.apps { display: flex; }
.apps button { width: 44px; display: grid; place-items: center; position: relative; }
.apps button > svg { width: 24px; height: 24px; }
.open::after { content: ""; position: absolute; bottom: 3px; left: 19px; width: 6px; height: 3px; border-radius: 2px; background: #8b999c; }
.focused::before { content: ""; position: absolute; inset: 4px 2px; border-radius: 4px; background: #ffffff14; }
.open.focused::after { left: 14px; width: 16px; background: #4fe68b; }
.badge { position: absolute; top: 8px; right: 5px; width: 14px; height: 14px; border-radius: 50%; }
.ring { background: #d81b60; border: 2px solid #26a69a; }
.rec { background: #f00000; width: 12px; height: 12px; }
.photo { background: #8a7562; border: 3px solid #2b2a22; width: 12px; height: 12px; top: 12px; right: 8px; border-radius: 2px; }
.avatar { width: 16px; height: 16px; }
.avatar svg { display: block; }
.tray { display: flex; align-items: center; justify-content: flex-end; gap: 20px; padding-right: 21px; }
.lang { text-align: center; }
.status { display: flex; gap: 8px; margin: 0 -8px 0 -2px; }
.cursor { position: absolute; left: 525px; top: 488px; }
```
